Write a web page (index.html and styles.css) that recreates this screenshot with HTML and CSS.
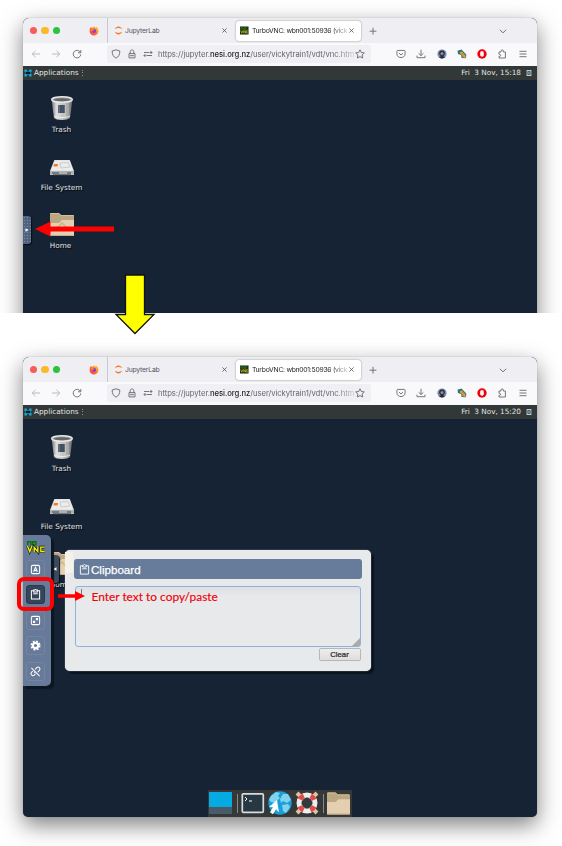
FILE: index.html
```html
<!DOCTYPE html>
<html lang="en">
<head>
<meta charset="utf-8">
<title>Clipboard in the virtual desktop</title>
<link rel="stylesheet" href="styles.css">
</head>
<body>
<svg class="defs" aria-hidden="true">
  <defs>
    <linearGradient id="metal"><stop offset="0" stop-color="#777"/><stop offset=".25" stop-color="#ddd"/><stop offset=".65" stop-color="#bbb"/><stop offset="1" stop-color="#666"/></linearGradient>
    <linearGradient id="fire" x1="1" y1="0" x2="0" y2="1"><stop offset="0" stop-color="#ffda35"/><stop offset=".45" stop-color="#ff8125"/><stop offset="1" stop-color="#f42c65"/></linearGradient>
  </defs>
  <symbol id="firefox" viewBox="0 0 10 10"><path d="M1 2 2 1l1 1.1L5.2.5 6.5 1.7 7.5.7C9 2 9.8 4 9.3 6 8.7 8.3 7 9.5 5 9.5 2.6 9.5.7 7.8.6 5.3.6 4 .8 3 1 2z" fill="url(#fire)"/><circle cx="5.1" cy="5" r="2.1" fill="#8a43c6"/><path d="M2 3.3c1.2-.6 2.6.1 3.2 1L3.3 5.1z" fill="#ff8b25"/></symbol>
  <symbol id="jupyter" viewBox="0 0 10 10"><path d="M.9 3.5C2.5-.3 7.5-.3 9.1 3.5 6.8 1.8 3.2 1.8.9 3.5zM.9 6.5C2.5 10.3 7.5 10.3 9.1 6.5 6.8 8.2 3.2 8.2.9 6.5z" fill="#f37726"/></symbol>
  <symbol id="vncfav" viewBox="0 0 10 10"><path d="M0 .5h9.5v9H0z" fill="#26301c"/><path d="M1 4V2h2v2m1.5-2h2v2h-2z" stroke="#188018" fill="none"/><path d="M.8 5 2 8 3.1 5m1 3V5l2 3V5m3 .4H7v2.3h2" stroke="#c5bd12" stroke-width=".8" fill="none"/></symbol>
  <symbol id="close" viewBox="0 0 10 10"><path d="m2.7 2.7 4.6 4.6m0-4.6L2.7 7.3"/></symbol>
  <symbol id="plus" viewBox="0 0 10 10"><path d="M5 1.8v6.8M1.6 5.2h6.8"/></symbol>
  <symbol id="chev" viewBox="0 0 10 10"><path d="m1.8 3.8 3.2 3 3.2-3"/></symbol>
  <symbol id="back" viewBox="0 0 10 10"><path d="M9 5H1.3m3.2-3.2L1.2 5l3.3 3.2"/></symbol>
  <symbol id="fwd" viewBox="0 0 10 10"><path d="M1 5h7.7M5.5 1.8 8.8 5 5.5 8.2"/></symbol>
  <symbol id="reload" viewBox="0 0 10 10"><path d="M8.3 3.2A3.8 3.8 0 1 0 8.8 5.5M8.8 1v2.8H6"/></symbol>
  <symbol id="shield" viewBox="0 0 10 10"><path d="M5 .8 8.8 2C9 5.3 7.7 7.8 5 9.2 2.3 7.8 1 5.3 1.2 2z"/></symbol>
  <symbol id="lock" viewBox="0 0 10 10"><path d="M2 4.6h6v4.3H2zM3.2 4.6V2.7C3.2.3 6.8.3 6.8 2.7v1.9M3 6.7h4"/></symbol>
  <symbol id="swap" viewBox="0 0 10 10"><path d="M1 3.5h5.4M3.4 6.5H9M2.5 5 1 6.5 2.5 8M7.5 2 9 3.5 7.5 5M1 6.5h1.6M7 3.5h2"/></symbol>
  <symbol id="star" viewBox="0 0 10 10"><path d="m5 .8 1.3 2.7 3 .4-2.2 2.1.6 3L5 7.6 2.3 9l.6-3L.7 3.9l3-.4z"/></symbol>
  <symbol id="pocket" viewBox="0 0 10 10"><path d="M1.9 1.4h6.2c.6 0 1 .4 1 1V4.8c0 5-8.2 5-8.2 0V2.4c0-.6.4-1 1-1zM3 4.1l2 1.9 2-1.9"/></symbol>
  <symbol id="down" viewBox="0 0 10 10"><path d="M5 .7v5.8M2.6 4.3 5 6.6l2.4-2.3M1 6.6v2.1h8V6.6"/></symbol>
  <symbol id="avatar" viewBox="0 0 10 10"><circle cx="5" cy="5" r="4.6" fill="#6d8cba"/><circle cx="5" cy="4.2" r="2.8" fill="#302938"/><circle cx="5" cy="4.6" r="1.5" fill="#b98872"/><path d="M2.4 8.6C3 6.6 7 6.6 7.6 8.6 6 9.8 4 9.8 2.4 8.6z" fill="#28263c"/></symbol>
  <symbol id="brush" viewBox="0 0 10 10"><path d="M.5 1.8 4.5.6 9.3 5.6 9 9.2 4.6 9 4 6 1 5z" fill="#277083"/><path d="M2.6 3.4 4.6 2.2l3.6 3.5.6 3.2-3.2-.6z" fill="#e8a22c"/><path d="m3.8 5 2.7 2.9M5 3.6l3 3" stroke="#6f7046" stroke-width=".6"/></symbol>
  <symbol id="blocker" viewBox="0 0 10 10"><circle cx="5" cy="5" r="4.7" fill="#f3000b"/><path d="M3.2 3.4 3.8 2.2l.5.3.6-.8.7.7.8-.1.5 3.4C6.7 8.3 3.6 8.2 3.1 6z" fill="#fff"/></symbol>
  <symbol id="puzzle" viewBox="0 0 10 10"><path d="M2 3h2V2C4 .5 6.4.5 6.4 2v1h2v6H2V7.4h.6c1.4 0 1.4-2 0-2H2z"/></symbol>
  <symbol id="menu" viewBox="0 0 10 10"><path d="M1.5 2.3h7M1.5 5h7M1.5 7.7h7"/></symbol>
  <symbol id="xfce" viewBox="0 0 8 8"><path d="M.5.5h2l.7 1.7h1.6L5.5.5h2V3L5.8 4l1.7 1v2.5h-2L4.8 6H3.2l-.7 1.5h-2V5l1.7-1L.5 3z" fill="#14aee5"/><path d="M1.8 2.7h4.4v2.6H1.8z" fill="#071b24"/></symbol>
  <symbol id="trash" viewBox="0 0 24 24"><path d="M1.5 3h21L20 22c-2 2.5-14 2.5-16 0z" fill="url(#metal)"/><path d="M8 9h7v8H8z" fill="#435263"/><path d="M6 6v14m3-13v15m6-15v15m3-16v14" stroke="#eee" stroke-opacity=".35"/><ellipse cx="12" cy="3.5" rx="10.3" ry="2.8" fill="#999" stroke="#e8e8e8" stroke-width="1.4"/><ellipse cx="12" cy="3.8" rx="8" ry="1.5" fill="#666"/><path d="M4 20c3 2 13 2 16 0" fill="none" stroke="#eee"/></symbol>
  <symbol id="disk" viewBox="0 0 24 24"><path d="M4.3 7h15.5L24 18v4H0v-4z" fill="#d9dadb"/><path d="M5 7.5h14.4L23 17.5H1z" fill="#ececec"/><path d="M0 18h24v3.6H0z" fill="#aeb0b1"/><path d="M4 11h4l-.5 2.6h-4z" fill="#f07b27"/><path d="m10 10 8-.5 2 4.5-9 1z" fill="none" stroke="#ccc"/><path d="M2 20h7m8 0h4" stroke="#444"/><path d="M3 21.7h18" stroke="#666"/></symbol>
  <symbol id="folder" viewBox="0 0 24 24"><path d="M0 1h9l2 2h13v12H0z" fill="#bba782"/><path d="M1 1.5h8l2 2h12" stroke="#d3c09c" fill="none"/><path d="M0 11h9l3-3h12v16H0z" fill="#e4d0b1"/><path d="M.5 23.5h23" stroke="#c4ae89"/></symbol>
  <symbol id="page" viewBox="0 0 10 10"><path d="M1 0h8v10H1z" fill="#bed0da"/><path d="M3 2.4h4v5H3zM5 3.5v3" stroke="#253642" stroke-width="1.2" fill="none"/></symbol>
  <symbol id="board" viewBox="0 0 12 12"><path d="M3.8 2H1.5v9h9V2H8.2M4 1.2h1l1-.9 1 .9h1v2.1H4zM3.5 5.2h5"/></symbol>
</svg>

<main>
<section class="shot first">
  <div class="window">
    <div class="tabs">
      <div class="lights"><i></i><i></i><i></i></div>
      <svg class="ff"><use href="#firefox"/></svg>
      <div class="tab"><svg><use href="#jupyter"/></svg><span>JupyterLab</span><svg class="line x"><use href="#close"/></svg></div>
      <div class="tab active"><svg><use href="#vncfav"/></svg><span>TurboVNC: wbn001:50936 (vick</span><svg class="line x"><use href="#close"/></svg></div>
      <svg class="line add"><use href="#plus"/></svg><svg class="line chev"><use href="#chev"/></svg>
    </div>
    <div class="toolbar">
      <div class="nav"><svg class="line dim"><use href="#back"/></svg><svg class="line dim"><use href="#fwd"/></svg><svg class="line"><use href="#reload"/></svg></div>
      <div class="url"><svg class="line"><use href="#shield"/></svg><svg class="line"><use href="#lock"/></svg><svg class="line"><use href="#swap"/></svg><span>https://jupyter.<b>nesi.org.nz</b>/user/vickytrain1/vdt/vnc.htm</span><svg class="line"><use href="#star"/></svg></div>
      <div class="tools"><svg class="line"><use href="#pocket"/></svg><svg class="line"><use href="#down"/></svg><svg><use href="#avatar"/></svg><svg><use href="#brush"/></svg><svg><use href="#blocker"/></svg><svg class="line"><use href="#puzzle"/></svg><svg class="line"><use href="#menu"/></svg></div>
    </div>
    <div class="panel"><svg><use href="#xfce"/></svg><span class="apps">Applications</span><i class="dots"></i><time>Fri  3 Nov, 15:18</time><svg class="out"><use href="#page"/></svg></div>
    <div class="desktop">
      <div class="shortcut"><svg class="bin"><use href="#trash"/></svg><span>Trash</span></div>
      <div class="shortcut"><svg><use href="#disk"/></svg><span>File System</span></div>
      <div class="shortcut home"><svg viewBox="0 0 24 24"><use href="#folder"/><path d="m6 17 6-6 6 6" fill="none" stroke="#c8b48f" stroke-width="1.5"/></svg><span>Home</span></div>
      <div class="handle"><svg viewBox="0 0 4 4"><path d="M.5.3 3.7 2 .5 3.7z"/></svg></div>
    </div>
  </div>
  <svg class="arrow-handle" viewBox="0 0 80 16"><path d="M0 8 15.5.5v5H79v5H15.5v5z" fill="#f00"/></svg>
</section>

<section class="shot second">
  <div class="window">
    <div class="tabs">
      <div class="lights"><i></i><i></i><i></i></div>
      <svg class="ff"><use href="#firefox"/></svg>
      <div class="tab"><svg><use href="#jupyter"/></svg><span>JupyterLab</span><svg class="line x"><use href="#close"/></svg></div>
      <div class="tab active"><svg><use href="#vncfav"/></svg><span>TurboVNC: wbn001:50936 (vick</span><svg class="line x"><use href="#close"/></svg></div>
      <svg class="line add"><use href="#plus"/></svg><svg class="line chev"><use href="#chev"/></svg>
    </div>
    <div class="toolbar">
      <div class="nav"><svg class="line dim"><use href="#back"/></svg><svg class="line dim"><use href="#fwd"/></svg><svg class="line"><use href="#reload"/></svg></div>
      <div class="url"><svg class="line"><use href="#shield"/></svg><svg class="line"><use href="#lock"/></svg><svg class="line"><use href="#swap"/></svg><span>https://jupyter.<b>nesi.org.nz</b>/user/vickytrain1/vdt/vnc.htm</span><svg class="line"><use href="#star"/></svg></div>
      <div class="tools"><svg class="line"><use href="#pocket"/></svg><svg class="line"><use href="#down"/></svg><svg><use href="#avatar"/></svg><svg><use href="#brush"/></svg><svg><use href="#blocker"/></svg><svg class="line"><use href="#puzzle"/></svg><svg class="line"><use href="#menu"/></svg></div>
    </div>
    <div class="panel"><svg><use href="#xfce"/></svg><span class="apps">Applications</span><i class="dots"></i><time>Fri  3 Nov, 15:20</time><svg class="out"><use href="#page"/></svg></div>
    <div class="desktop">
      <div class="shortcut"><svg class="bin"><use href="#trash"/></svg><span>Trash</span></div>
      <div class="shortcut"><svg><use href="#disk"/></svg><span>File System</span></div>
      <div class="shortcut home"><svg viewBox="0 0 24 24"><use href="#folder"/><path d="m6 17 6-6 6 6" fill="none" stroke="#c8b48f" stroke-width="1.5"/></svg><span>Home</span></div>
      <div class="handle open"><svg viewBox="0 0 4 4"><path d="M3.5.3.3 2l3.2 1.7z"/></svg></div>
      <div class="vnc">
        <svg class="logo" viewBox="0 0 20 13"><path d="M1 4.2V.8h3.4v3.4m2-3.4h3.4v3.4H6.4z" fill="none" stroke="#087508" stroke-width="1.6"/><path d="m.8 5.5 2.4 6 2.4-6M8 12.3V6.8l4 4.7V5.8m7.5.8h-4.3v4.8h4.3" fill="none" stroke="#171b14" stroke-width="2.8"/><path d="m.8 5.5 2.4 6 2.4-6M8 12.3V6.8l4 4.7V5.8m7.5.8h-4.3v4.8h4.3" fill="none" stroke="#eded0a" stroke-width="1.5"/></svg>
        <button><svg viewBox="0 0 12 12"><rect x="1.5" y="1.5" width="9" height="9" rx="1.5"/><path d="M4 8.5 6 3.6l2 4.9M4.8 7h2.4"/></svg></button>
        <button class="on"><svg><use href="#board"/></svg></button>
        <button><svg viewBox="0 0 12 12"><rect x="1.5" y="1.5" width="9" height="9" rx="1.5"/><path d="M6.4 3.2h2.4v2.4H6.4zM3.2 6.4h2.4v2.4H3.2z" fill="#fff" stroke="none"/></svg></button>
        <button><svg viewBox="0 0 12 12"><circle cx="6" cy="6" r="4.4" fill="none" stroke-width="2.2" stroke-dasharray="2 1.456"/><circle cx="6" cy="6" r="2.9" fill="none" stroke-width="2.3"/></svg></button>
        <button><svg viewBox="0 0 12 12"><path d="m1.5 2 9 9M5.6 3.6l1.7-1.8c2-1.8 4.8 1 3 3L8.5 6.6M6 8.4l-1.4 1.5c-2 1.8-4.7-1-3-3L3 5.5M4.6 7.2l.8-.8"/></svg></button>
      </div>
      <div class="clipboard">
        <h1><svg><use href="#board"/></svg>Clipboard</h1>
        <div class="field"><i></i><span>Enter text to copy/paste</span><svg viewBox="0 0 8 8"><path d="M8 0v8H0z" fill="#aaa"/></svg></div>
        <button>Clear</button>
      </div>
      <div class="ghost"></div>
      <div class="dock">
        <svg viewBox="0 0 24 24"><path d="M0 1h23v15H0z" fill="#05aae3"/><path d="M0 16h23v7H0z" fill="#485b69"/></svg><i></i>
        <svg viewBox="0 0 24 24"><rect x="1.3" y="2.8" width="21" height="18.5" rx="1" fill="#273842" stroke="#d6dcdf" stroke-width="1.7"/><path d="m4 6 2 2-2 2m4 0h3" fill="none" stroke="#fff"/></svg>
        <svg viewBox="0 0 24 24"><circle cx="12" cy="12" r="11.7" fill="#199fd8"/><path d="m3 5 5-4 4 1-2 3 2 2-5 5-4-1-2-2zM15 3l5 0 3 6-4 3-4-2-2 2-1-4zM14 14l6-1 2 3-4 6-3-2z" fill="#80d2ed"/><path d="m9 9-8 7 4 .3-3 5 3 2 3-5 3 3z" fill="#fff"/></svg>
        <svg viewBox="0 0 24 24"><path d="M2 2 22 22M22 2 2 22" stroke="#e0c39a" stroke-width="4"/><circle cx="12" cy="12" r="8" fill="none" stroke="#eee" stroke-width="5"/><circle cx="12" cy="12" r="8" fill="none" stroke="#df4c4d" stroke-width="5" stroke-dasharray="5.5 7.07" stroke-dashoffset="-3.5"/><circle cx="12" cy="12" r="5.2" fill="#34393a"/></svg><i></i>
        <svg><use href="#folder"/></svg>
      </div>
    </div>
  </div>
  <div class="highlight"></div>
  <svg class="arrow-field" viewBox="0 0 28 12"><path d="M0 4.3h17V1l10 5-10 5V7.7H0z" fill="#f00"/></svg>
</section>
<svg class="arrow-down" viewBox="0 0 40 61"><path d="M10.5 1h19v39.5h9.5L20 59.5 1 40.5h9.5z" fill="#ff0" stroke="#111" stroke-width="1.3"/></svg>
</main>
</body>
</html>
```
FILE: styles.css
```css
* { box-sizing: border-box; }
body { margin: 0; background: #fff; font-family: Inter, sans-serif; }
main { position: relative; width: 562px; height: 846px; overflow: hidden; }
svg { display: block; flex: none; width: 10px; height: 10px; overflow: visible; }
.defs { position: absolute; width: 0; height: 0; }
.shot { position: relative; overflow: hidden; padding: 18px 25px 0 23px; height: 313px; }
.shot.second { height: 533px; padding-top: 44px; }
.window { width: 513.5px; height: 460px; border-radius: 6px 6px 5px 5px; background: #162334; box-shadow: 0 0 1px #777, 0 8px 22px rgba(0,0,0,.5); }
.line { fill: none; stroke: #66666d; stroke-width: .9; }

.tabs { height: 25px; display: flex; align-items: center; background: #efeef3; border-radius: 6px 6px 0 0; font-size: 6.8px; color: #55555c; }
.lights { display: flex; gap: 4px; margin-left: 6.5px; width: 59.5px; }
.lights i { width: 7.5px; height: 7.5px; border-radius: 50%; background: #fb5b55; }
.lights i:nth-child(2) { background: #fbb928; }
.lights i:nth-child(3) { background: #27c43c; }
.ff { margin-right: 8px; }
.tab { display: flex; align-items: center; width: 129px; height: 25px; border-left: 1px solid #c8c8ce; padding-left: 5.5px; }
.tab span { width: 99px; margin-left: 2.5px; white-space: nowrap; letter-spacing: -.2px; }
.tab svg { width: 9px; height: 9px; }
.tab .x { stroke: #505057; margin-left: -4px; }
.tab.active { width: 124.5px; height: 20px; border: 0; border-radius: 3px; background: #fff; box-shadow: 0 0 2px #888; padding-left: 4px; color: #222; margin-right: 7px; }
.tab.active span { width: 96px; margin-left: 3px; letter-spacing: -.27px; mask-image: linear-gradient(90deg, #000 78px, #0004 94px); }
.tab.active .x { margin-left: -1.5px; }
.chev { margin-left: auto; margin-right: 29px; }

.toolbar { height: 22.5px; display: flex; align-items: center; background: #f9f9fc; }
.nav { display: flex; gap: 10.3px; margin-left: 8px; width: 76px; }
.dim { stroke: #b2b2b8; }
.url { display: flex; align-items: center; width: 264px; height: 18px; border-radius: 2px; background: #efeff4; padding-left: 4px; color: #66666e; font-size: 7.7px; }
.url > svg { margin-right: 6px; }
.url span { width: 198px; white-space: nowrap; letter-spacing: -.06px; margin-left: -1px; margin-right: 1px; mask-image: linear-gradient(90deg, #000 177px, #0003 197px); }
.url b { color: #242429; font-weight: 500; }
.tools { display: flex; gap: 10.3px; margin-left: 25px; }

.panel { height: 14.5px; display: flex; align-items: center; background: #323838; color: #e1e4e4; font: 7.3px/10px "DejaVu Sans", sans-serif; padding-left: 1px; }
.panel > svg { width: 8px; height: 8px; }
.panel .apps { margin-left: 2px; width: 45px; }
.panel .dots { width: 1px; height: 6px; margin-left: 3px; background: repeating-linear-gradient(#8d9393 0 1px, transparent 1px 2.5px); }
.panel time { margin-left: auto; white-space: pre; letter-spacing: -.02px; }
.panel .out { width: 6px; height: 6px; margin: 0 4.5px 0 5px; }

.desktop { position: relative; padding: 16px 0 0 8px; }
.shortcut { display: flex; flex-direction: column; align-items: center; width: 61px; height: 58px; color: #e2e6ea; font: 7.3px/11px "DejaVu Sans", sans-serif; text-shadow: 1px 1px 1px #000; }
.shortcut svg { width: 24px; height: 24px; margin-bottom: 4px; }
.shortcut:nth-child(2) svg { margin-top: -1px; margin-bottom: 5px; }
.shortcut.home span { margin-left: -2px; }
.handle { position: absolute; left: 0; top: 136px; width: 8px; height: 28px; border-radius: 0 3px 3px 0; background: radial-gradient(#7a8ba5 20%, transparent 35%) 0 0 / 3px 3px, #506480; display: flex; align-items: center; justify-content: center; box-shadow: 1px 1px 1px #070e16; }
.handle.open { left: 28px; background: #3c4a5f; }
.handle svg { width: 4px; height: 4px; fill: #fff; }

.vnc { position: absolute; left: 0; top: 116px; width: 27.5px; height: 151px; border-radius: 0 5px 5px 0; background: #677a99; box-shadow: 3px 3px 1px #0b1621; display: flex; flex-direction: column; padding: 5.5px 0 0 3px; gap: 6.5px; }
.vnc .logo { width: 20px; height: 12px; margin-bottom: .5px; }
.vnc button { width: 19px; height: 19px; padding: 3px; border: 1px solid #74859f; border-radius: 3px; background: none; }
.vnc button.on { background: #344459; border-color: #2b394b; }
.vnc button svg { width: 11px; height: 11px; fill: none; stroke: #fff; stroke-width: 1.1; }
.clipboard { position: absolute; left: 42px; top: 131px; width: 306px; height: 121px; border-radius: 5px; background: #e8e9eb; box-shadow: 0 0 1px #fff, 3px 3px 1px #08141d; padding: 9px 9px 0; display: flex; flex-direction: column; }
.clipboard h1 { margin: 0; height: 20px; border-radius: 3px; background: #677b9a; display: flex; align-items: center; color: #fff; font: 11.6px "Liberation Sans", sans-serif; -webkit-text-stroke: .25px #fff; padding-left: 5px; gap: 1px; }
.clipboard h1 svg { width: 11px; height: 11px; fill: none; stroke: #fff; stroke-width: 1; }
.field { position: relative; width: 286px; height: 61px; margin: 6.5px 0 1.5px 1px; border: 1.5px solid #8cb2df; border-radius: 3px; background: linear-gradient(#dfe0e2, #e8e9eb 10px); padding: 2px 0 0 5px; display: flex; color: #f0000a; font: 11.9px/15px Lato, sans-serif; }
.field i { width: 1px; height: 8px; background: #777; }
.field span { margin-left: 9.5px; white-space: nowrap; -webkit-text-stroke: .15px #f0000a; }
.field svg { position: absolute; right: 0; bottom: 0; width: 8px; height: 8px; }
.clipboard button { width: 42px; height: 13px; align-self: flex-end; margin-right: 1.5px; padding: 0; border: 1px solid #b5b6ba; border-radius: 2px; background: linear-gradient(#eee, #ddd); color: #222; font: 7.8px/10px "Liberation Sans", sans-serif; -webkit-text-stroke: .2px #222; }
.ghost { position: absolute; left: 42px; top: 133px; width: 8px; height: 21px; background: #f5f2e9; }
.dock { position: absolute; left: 185px; top: 370.5px; width: 144px; height: 27px; background: #343839; display: flex; align-items: center; padding-left: 1px; }
.dock svg { width: 24px; height: 24px; }
.dock i { width: 1px; height: 19px; margin: 0 3.5px; background: #888; }
.dock svg:nth-of-type(3), .dock svg:nth-of-type(4) { margin-left: 3px; }
.dock i + svg:last-child { width: 23px; }

.highlight { position: absolute; left: 17px; top: 264px; width: 37px; height: 34px; border: 4.5px solid #f00; border-radius: 7px; }
.arrow-handle { position: absolute; left: 35px; top: 221px; width: 80px; height: 16px; }
.arrow-field { position: absolute; left: 58px; top: 277px; width: 28px; height: 12px; }
.arrow-down { position: absolute; left: 115px; top: 274px; width: 40px; height: 61px; }
```
